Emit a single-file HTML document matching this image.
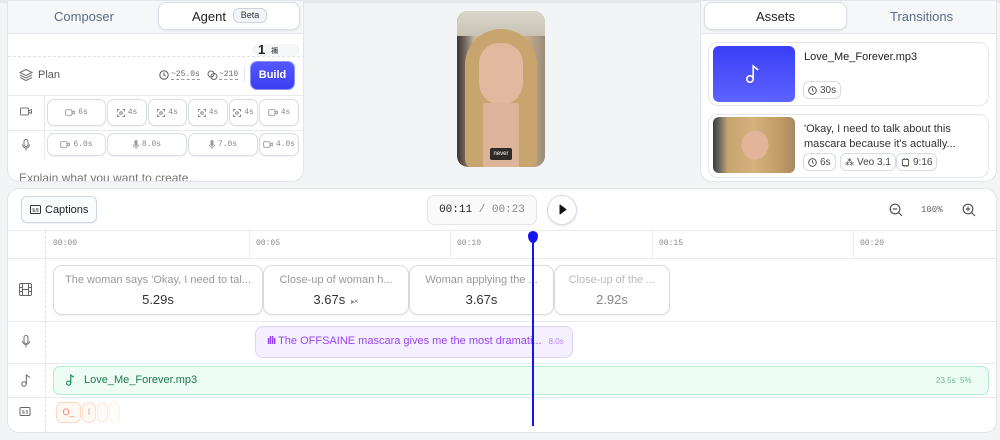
<!DOCTYPE html>
<html><head><meta charset="utf-8">
<style>
*{box-sizing:border-box;margin:0;padding:0}
body{width:1000px;height:440px;background:#f3f4f6;font-family:"Liberation Sans",sans-serif;position:relative;overflow:hidden;color:#222}
.a{position:absolute}
.mono{font-family:"Liberation Mono",monospace}
.panel{background:#fff;border:1px solid #e3e5ea;border-radius:0 0 12px 12px}
.chip{position:absolute;border:1px solid #d9dde5;border-radius:7px;background:#fff;font-family:"Liberation Mono",monospace;font-size:8px;color:#888;display:flex;align-items:center;justify-content:center;gap:3px;white-space:nowrap;overflow:hidden;box-shadow:0 1px 1px rgba(0,0,0,.05)}
.tag{position:absolute;border:1px solid #d6dbe6;border-radius:6px;font-size:10px;color:#444;display:flex;align-items:center;gap:3px;padding:0 4px;height:18px;background:#fff;white-space:nowrap}
.clip{position:absolute;top:265px;height:50px;border:1px solid #d7dbe4;border-radius:9px;background:#fff;text-align:center;box-shadow:0 1px 2px rgba(0,0,0,.06)}
.clip .t{font-size:11px;color:#999;margin-top:8px;white-space:nowrap;overflow:hidden}
.clip .d{font-size:13px;color:#333;margin-top:6px}
.hl{position:absolute;left:8px;width:988px;height:1px;background:#e8eaee}
svg{display:block}
</style></head><body>
<div class="a" style="left:0;top:0;width:1000px;height:3px;background:#e6e7ea"></div>

<!-- LEFT PANEL -->
<div class="a panel" style="left:7px;top:0;width:297px;height:182px;overflow:hidden">
  <div class="a" style="left:0;top:0;width:297px;height:33px;background:#f6f7f9;border-bottom:1px solid #e3e5ea"></div>
  <div class="a" style="left:46px;top:8px;font-size:13px;color:#5a6b85">Composer</div>
  <div class="a" style="left:150px;top:1px;width:142px;height:28px;background:#fff;border:1px solid #d9dde5;border-radius:8px;box-shadow:0 1px 2px rgba(0,0,0,.08)"></div>
  <div class="a" style="left:184px;top:8px;font-size:13px;color:#222">Agent</div>
  <div class="a" style="left:225px;top:7px;width:34px;height:15px;border:1px solid #cdd3de;border-radius:6px;background:#f3f5f9;font-size:9px;text-align:center;line-height:13px;color:#333">Beta</div>
  <div class="a" style="left:244px;top:43px;width:48px;height:12px;background:#f5f6f8;border-radius:6px"></div>
  <div class="a" style="left:250px;top:41px;font-size:13px;font-weight:bold">1</div>
  <div class="a" style="left:263px;top:45px;font-size:7px">禰</div>
  <div class="a" style="left:0;top:55px;width:297px;border-top:1px dashed #dde0e6"></div>
  <svg class="a" style="left:11px;top:67px" width="14" height="14" viewBox="0 0 14 14" fill="none" stroke="#777" stroke-width="1.1"><path d="M7 1.5L13 4.5 7 7.5 1 4.5z"/><path d="M1 7l6 3 6-3"/><path d="M1 9.5l6 3 6-3"/></svg>
  <div class="a" style="left:30px;top:68px;font-size:11px;color:#555">Plan</div>
  <svg class="a" style="left:151px;top:69px" width="10" height="10" viewBox="0 0 10 10" fill="none" stroke="#555"><circle cx="5" cy="5" r="4.2"/><path d="M5 2.5V5l1.6 1"/></svg>
  <div class="a mono" style="left:163px;top:69px;font-size:8px;color:#666;border-bottom:1px dashed #999">~25.0s</div>
  <svg class="a" style="left:199px;top:69px" width="11" height="10" viewBox="0 0 11 10" fill="none" stroke="#666"><circle cx="4" cy="4" r="3"/><circle cx="7" cy="6.5" r="3"/></svg>
  <div class="a mono" style="left:211px;top:69px;font-size:8px;color:#666;border-bottom:1px dashed #999">~210</div>
  <div class="a" style="left:236px;top:66px;width:1px;height:15px;background:#e3e5ea"></div>
  <div class="a" style="left:243px;top:61px;width:43px;height:27px;background:linear-gradient(#5558ff,#3a3ef0);border-radius:6px;color:#fff;font-size:11px;font-weight:bold;text-align:center;line-height:27px;box-shadow:0 0 0 1px #8d8fff">Build</div>
  <div class="a" style="left:0;top:94px;width:297px;height:1px;background:#e8eaee"></div>
  <div class="a" style="left:36px;top:95px;width:1px;height:62px;background:#e8eaee"></div>
  <div class="a" style="left:0;top:129px;width:297px;height:1px;background:#e8eaee"></div>
  <svg class="a" style="left:12px;top:106px" width="12" height="9" viewBox="0 0 12 9" fill="none" stroke="#777"><rect x=".5" y="1" width="8" height="7" rx="1"/><path d="M8.5 4l3-1.5v4L8.5 5"/></svg>
  <svg class="a" style="left:14px;top:138px" width="8" height="12" viewBox="0 0 8 12" fill="none" stroke="#777"><rect x="2" y=".5" width="4" height="7" rx="2"/><path d="M.5 5.5a3.5 3.5 0 007 0M4 9v2.5"/></svg>
  <div class="chip" style="left:39px;top:98px;width:59px;height:27px"><svg width="10" height="7" viewBox="0 0 12 9" fill="none" stroke="#888"><rect x=".5" y="1" width="8" height="7" rx="1"/><path d="M8.5 4l3-1.5v4L8.5 5"/></svg>6s</div>
  <div class="chip" style="left:99px;top:98px;width:40px;height:27px"><svg width="8" height="8" viewBox="0 0 8 8" fill="none" stroke="#888"><path d="M.5 2.5v-2h2M5.5.5h2v2M7.5 5.5v2h-2M2.5 7.5h-2v-2"/><circle cx="4" cy="4" r="1.3"/></svg>4s</div>
  <div class="chip" style="left:140px;top:98px;width:39px;height:27px"><svg width="8" height="8" viewBox="0 0 8 8" fill="none" stroke="#888"><path d="M.5 2.5v-2h2M5.5.5h2v2M7.5 5.5v2h-2M2.5 7.5h-2v-2"/><circle cx="4" cy="4" r="1.3"/></svg>4s</div>
  <div class="chip" style="left:180px;top:98px;width:40px;height:27px"><svg width="8" height="8" viewBox="0 0 8 8" fill="none" stroke="#888"><path d="M.5 2.5v-2h2M5.5.5h2v2M7.5 5.5v2h-2M2.5 7.5h-2v-2"/><circle cx="4" cy="4" r="1.3"/></svg>4s</div>
  <div class="chip" style="left:221px;top:98px;width:29px;height:27px"><svg width="8" height="8" viewBox="0 0 8 8" fill="none" stroke="#888"><path d="M.5 2.5v-2h2M5.5.5h2v2M7.5 5.5v2h-2M2.5 7.5h-2v-2"/><circle cx="4" cy="4" r="1.3"/></svg>4s</div>
  <div class="chip" style="left:251px;top:98px;width:40px;height:27px"><svg width="10" height="7" viewBox="0 0 12 9" fill="none" stroke="#888"><rect x=".5" y="1" width="8" height="7" rx="1"/><path d="M8.5 4l3-1.5v4L8.5 5"/></svg>4s</div>
  <div class="chip" style="left:39px;top:132px;width:59px;height:23px"><svg width="10" height="7" viewBox="0 0 12 9" fill="none" stroke="#888"><rect x=".5" y="1" width="8" height="7" rx="1"/><path d="M8.5 4l3-1.5v4L8.5 5"/></svg>6.0s</div>
  <div class="chip" style="left:99px;top:132px;width:80px;height:23px"><svg width="6" height="9" viewBox="0 0 6 9" fill="#999"><rect x="1.5" y="0" width="3" height="6" rx="1.5"/><path d="M.3 4.5a2.7 2.7 0 005.4 0M3 7v2" stroke="#999" fill="none" stroke-width=".8"/></svg>8.0s</div>
  <div class="chip" style="left:180px;top:132px;width:70px;height:23px"><svg width="6" height="9" viewBox="0 0 6 9" fill="#999"><rect x="1.5" y="0" width="3" height="6" rx="1.5"/><path d="M.3 4.5a2.7 2.7 0 005.4 0M3 7v2" stroke="#999" fill="none" stroke-width=".8"/></svg>7.0s</div>
  <div class="chip" style="left:251px;top:132px;width:40px;height:23px"><svg width="10" height="7" viewBox="0 0 12 9" fill="none" stroke="#888"><rect x=".5" y="1" width="8" height="7" rx="1"/><path d="M8.5 4l3-1.5v4L8.5 5"/></svg>4.0s</div>
  <div class="a" style="left:11px;top:170px;font-size:12px;color:#777">Explain what you want to create...</div>
</div>

<!-- CENTER VIDEO -->
<div class="a" style="left:457px;top:11px;width:88px;height:156px;border-radius:11px;overflow:hidden;background:linear-gradient(90deg,#3a3530 0,#6a6058 8%,#c9b8a0 20%,#d7c2a6 50%,#c4ac8c 80%,#9a8c7c 100%)">
  <div class="a" style="left:0;top:0;width:88px;height:25px;background:linear-gradient(#d8d6cc,#c9c3b5)"></div>
  <div class="a" style="left:8px;top:18px;width:72px;height:140px;border-radius:36px 36px 10px 10px;background:#c8a56e"></div>
  <div class="a" style="left:22px;top:32px;width:44px;height:62px;border-radius:22px 22px 24px 24px;background:#e0b99e"></div>
  <div class="a" style="left:26px;top:92px;width:36px;height:64px;background:#dcb49a"></div>
  <div class="a" style="left:33px;top:137px;width:22px;height:12px;background:#2e2a28;border-radius:2px;color:#fff;font-size:6px;text-align:center;line-height:12px">never</div>
</div>

<!-- RIGHT PANEL -->
<div class="a panel" style="left:700px;top:0;width:297px;height:182px;overflow:hidden">
  <div class="a" style="left:0;top:0;width:297px;height:33px;background:#f6f7f9;border-bottom:1px solid #e3e5ea"></div>
  <div class="a" style="left:3px;top:1px;width:143px;height:28px;background:#fff;border:1px solid #d9dde5;border-radius:8px;box-shadow:0 1px 2px rgba(0,0,0,.08)"></div>
  <div class="a" style="left:55px;top:8px;font-size:13px">Assets</div>
  <div class="a" style="left:189px;top:8px;font-size:13px;color:#5a6b85">Transitions</div>
  <div class="a" style="left:7px;top:41px;width:281px;height:64px;border:1px solid #e3e5ea;border-radius:10px"></div>
  <div class="a" style="left:12px;top:45px;width:82px;height:56px;border-radius:6px;background:linear-gradient(#3a3ef6,#5d63ff)"></div>
  <svg class="a" style="left:44px;top:63px" width="16" height="20" viewBox="0 0 16 20" fill="none" stroke="#fff" stroke-width="1.6"><circle cx="5" cy="15" r="3.2"/><path d="M8.2 15V2l5 4"/></svg>
  <div class="a" style="left:103px;top:50px;font-size:11px">Love_Me_Forever.mp3</div>
  <div class="tag" style="left:102px;top:80px"><svg width="9" height="9" viewBox="0 0 10 10" fill="none" stroke="#444"><circle cx="5" cy="5" r="4.2"/><path d="M5 2.5V5l1.6 1"/></svg>30s</div>
  <div class="a" style="left:7px;top:113px;width:281px;height:64px;border:1px solid #e3e5ea;border-radius:10px"></div>
  <div class="a" style="left:12px;top:116px;width:82px;height:56px;border-radius:6px;background:radial-gradient(ellipse 22px 24px at 42px 28px,#e2b499 60%,transparent 62%),linear-gradient(90deg,#3b3b3b 0,#6a6a60 8%,#c8a470 18%,#d4b27c 50%,#bf9862 85%,#a58a6a)"></div>
  <div class="a" style="left:103px;top:121px;font-size:11px;line-height:15px;color:#333">'Okay, I need to talk about this<br>mascara because it's actually...</div>
  <div class="tag" style="left:102px;top:152px"><svg width="9" height="9" viewBox="0 0 10 10" fill="none" stroke="#444"><circle cx="5" cy="5" r="4.2"/><path d="M5 2.5V5l1.6 1"/></svg>6s</div>
  <div class="tag" style="left:139px;top:152px"><span style="font-size:9px">⁂</span>Veo 3.1</div>
  <div class="tag" style="left:195px;top:152px"><svg width="9" height="9" viewBox="0 0 10 10" fill="none" stroke="#444"><rect x="1.5" y="1.5" width="7" height="7" rx="1.5"/><path d="M3.5 0v1.5M6.5 0v1.5M3.5 8.5V10M6.5 8.5V10"/></svg>9:16</div>
</div>

<!-- TIMELINE -->
<div class="a" style="left:7px;top:188px;width:990px;height:245px;background:#fff;border:1px solid #e3e5ea;border-radius:12px"></div>
<div class="a" style="left:21px;top:196px;width:76px;height:27px;border:1px solid #cfd5e0;border-radius:6px;background:#fbfcfd;font-size:11px;display:flex;align-items:center;gap:4px;padding-left:8px;box-shadow:0 1px 1px rgba(0,0,0,.05)"><svg width="11" height="9" viewBox="0 0 11 9" fill="none" stroke="#333"><rect x=".5" y=".5" width="10" height="8" rx="1"/><path d="M2.5 4h2M6 4h2.5M2.5 6h3M6.5 6h2"/></svg>Captions</div>
<div class="a mono" style="left:427px;top:195px;width:110px;height:30px;border:1px solid #e3e5ea;border-radius:7px;background:#fafafa;font-size:11px;line-height:28px;text-align:center;color:#222">00:11 <span style="color:#888">/ 00:23</span></div>
<div class="a" style="left:547px;top:195px;width:30px;height:30px;border-radius:50%;border:1px solid #d5d9e1;background:#fff;box-shadow:0 1px 2px rgba(0,0,0,.1)"></div>
<svg class="a" style="left:559px;top:204px" width="8" height="11" viewBox="0 0 8 11"><path d="M1 1l6 4.5L1 10z" fill="#111" stroke="#111" stroke-linejoin="round"/></svg>
<svg class="a" style="left:889px;top:203px" width="14" height="14" viewBox="0 0 14 14" fill="none" stroke="#555" stroke-width="1.2"><circle cx="6" cy="6" r="4.8"/><path d="M9.5 9.5L13 13M3.8 6h4.4"/></svg>
<div class="a mono" style="left:921px;top:205px;font-size:9px;color:#666">100%</div>
<svg class="a" style="left:962px;top:203px" width="14" height="14" viewBox="0 0 14 14" fill="none" stroke="#555" stroke-width="1.2"><circle cx="6" cy="6" r="4.8"/><path d="M9.5 9.5L13 13M3.8 6h4.4M6 3.8v4.4"/></svg>

<div class="hl" style="top:230px"></div>
<div class="hl" style="top:258px"></div>
<div class="hl" style="top:321px"></div>
<div class="hl" style="top:363px"></div>
<div class="hl" style="top:397px"></div>
<div class="a" style="left:45px;top:231px;height:201px;border-left:1px dashed #dde0e6"></div>
<div class="a" style="left:249px;top:231px;width:1px;height:27px;background:#eceef1"></div>
<div class="a" style="left:450px;top:231px;width:1px;height:27px;background:#eceef1"></div>
<div class="a" style="left:652px;top:231px;width:1px;height:27px;background:#eceef1"></div>
<div class="a" style="left:853px;top:231px;width:1px;height:27px;background:#eceef1"></div>
<div class="a mono" style="left:53px;top:239px;font-size:8px;color:#888">00:00</div>
<div class="a mono" style="left:256px;top:239px;font-size:8px;color:#888">00:05</div>
<div class="a mono" style="left:457px;top:239px;font-size:8px;color:#888">00:10</div>
<div class="a mono" style="left:659px;top:239px;font-size:8px;color:#888">00:15</div>
<div class="a mono" style="left:860px;top:239px;font-size:8px;color:#888">00:20</div>

<svg class="a" style="left:19px;top:283px" width="13" height="13" viewBox="0 0 13 13" fill="none" stroke="#666"><rect x=".5" y=".5" width="12" height="12" rx="1.5"/><path d="M3.5 .5v12M9.5 .5v12M.5 4.5h3M.5 8.5h3M9.5 4.5h3M9.5 8.5h3M3.5 6.5h6"/></svg>
<svg class="a" style="left:22px;top:335px" width="8" height="13" viewBox="0 0 8 13" fill="none" stroke="#777"><rect x="2" y=".5" width="4" height="8" rx="2"/><path d="M.5 6a3.5 3.5 0 007 0M4 9.5V12.5"/></svg>
<svg class="a" style="left:21px;top:374px" width="10" height="13" viewBox="0 0 10 13" fill="none" stroke="#666"><circle cx="3" cy="10" r="2.3"/><path d="M5.3 10V1l3.5 2.5"/></svg>
<svg class="a" style="left:19px;top:407px" width="12" height="9" viewBox="0 0 11 9" fill="none" stroke="#666"><rect x=".5" y=".5" width="10" height="8" rx="1"/><path d="M2.5 4h2M6 4h2.5M2.5 6h3M6.5 6h2"/></svg>

<div class="clip" style="left:53px;width:210px"><div class="t">The woman says 'Okay, I need to tal...</div><div class="d">5.29s</div></div>
<div class="clip" style="left:263px;width:146px"><div class="t">Close-up of woman h...</div><div class="d">3.67s <span style="font-size:8px;color:#777">🕨×</span></div></div>
<div class="clip" style="left:409px;width:145px"><div class="t">Woman applying the ...</div><div class="d">3.67s</div></div>
<div class="clip" style="left:554px;width:116px"><div class="t" style="color:#bbb">Close-up of the ...</div><div class="d" style="color:#888">2.92s</div></div>

<div class="a" style="left:255px;top:326px;width:318px;height:32px;border:1px solid #ddd2fb;border-radius:8px;background:#f4f0ff"></div>
<div class="a" style="left:267px;top:335px;font-size:11px;color:#9a44f0;white-space:nowrap"><span style="font-weight:bold;letter-spacing:-1px">ıllı</span> The OFFSAINE mascara gives me the most dramati... <span style="font-size:8px;color:#b48af0;margin-left:4px">8.0s</span></div>

<div class="a" style="left:53px;top:366px;width:936px;height:29px;border:1px solid #b4ecd0;border-radius:7px;background:#edfcf4"></div>
<svg class="a" style="left:66px;top:374px" width="9" height="12" viewBox="0 0 10 13" fill="none" stroke="#1a8a57" stroke-width="1.3"><circle cx="3" cy="10" r="2.3"/><path d="M5.3 10V1l3.5 2.5"/></svg>
<div class="a" style="left:84px;top:374px;font-size:11px;color:#1d7a4d">Love_Me_Forever.mp3</div>
<div class="a" style="left:936px;top:376px;font-size:8px;color:#6dba92">23.5s&nbsp; 5%</div>

<div class="a" style="left:56px;top:402px;width:25px;height:21px;border:1px solid #fbd9c4;border-radius:6px;background:#fff7f2;font-size:9px;color:#f08060;line-height:19px;text-align:center">O_</div>
<div class="a" style="left:82px;top:402px;width:14px;height:21px;border:1px solid #fbe0d0;border-radius:6px;background:#fff8f4;font-size:9px;color:#f4a080;line-height:19px;text-align:center">I</div>
<div class="a" style="left:97px;top:402px;width:11px;height:21px;border:1px solid #fcebe0;border-radius:6px;background:#fffaf7"></div>
<div class="a" style="left:109px;top:402px;width:11px;height:21px;border:1px solid #fdf2ea;border-radius:6px;background:#fffcfa"></div>

<div class="a" style="left:532px;top:237px;width:1.5px;height:189px;background:#1414f0"></div>
<div class="a" style="left:528px;top:231px;width:10px;height:12px;background:#1414f0;border-radius:50% 50% 50% 50%/40% 40% 60% 60%"></div>
</body></html>
